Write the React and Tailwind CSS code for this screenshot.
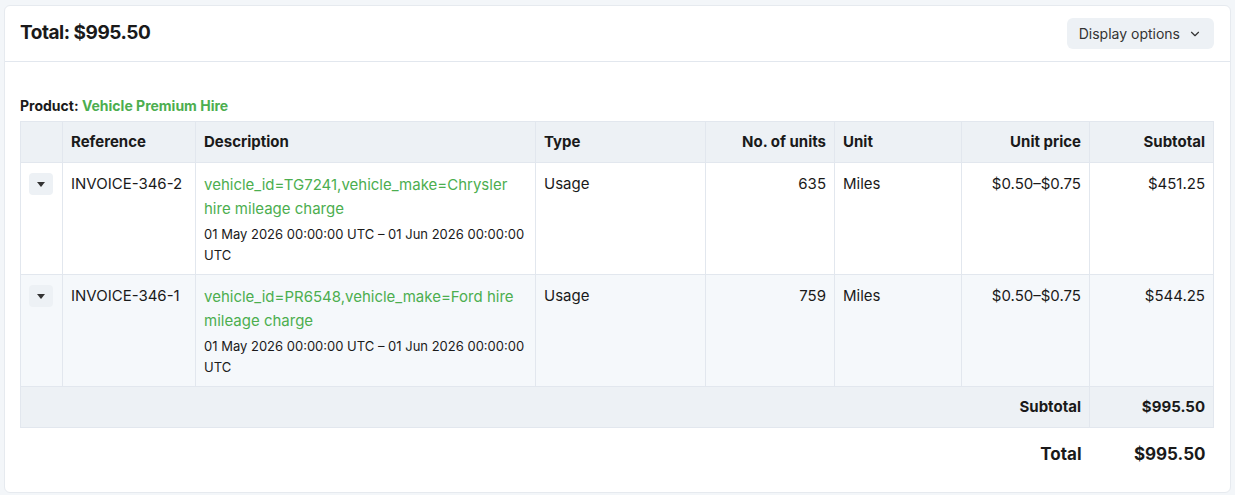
import React from 'react';
import { ChevronDown } from 'lucide-react';

const rows = [
  { ref: 'INVOICE-346-2', desc: 'vehicle_id=TG7241,vehicle_make=Chrysler hire mileage charge', units: 635, sub: '$451.25', bg: 'bg-white' },
  { ref: 'INVOICE-346-1', desc: 'vehicle_id=PR6548,vehicle_make=Ford hire mileage charge', units: 759, sub: '$544.25', bg: 'bg-[#f5f8fb]' },
];

const cell = 'border border-[#e2e7ee] px-2';
const top = `${cell} align-top pt-[10px]`;
const mid = `${cell} align-middle`;

export default function App() {
  return (
    <div className="min-h-[495px] bg-[#f3f6f9] px-1 pt-[5px] pb-[2px] text-[#1a1a1a]" style={{ fontFamily: 'Inter, "Noto Sans", sans-serif' }}>
      <div className="bg-white rounded-md border border-[#e6eaef] h-[488px]">
        <div className="flex items-center justify-between pl-[15px] pr-4 h-[56px] border-b border-[#e2e7ee]">
          <h1 className="text-[19px] font-bold tracking-tight">Total: $995.50</h1>
          <button className="flex items-center gap-2 bg-[#edf1f5] rounded-md h-[31px] px-3 text-[14px] text-[#333]">
            Display options <ChevronDown size={14} />
          </button>
        </div>
        <div className="pl-[15px] pr-4 pt-[33px]">
          <div className="text-[14px] font-bold mb-[5px]">Product: <span className="text-[#4cae4f]">Vehicle Premium Hire</span></div>
          <table className="w-full border-collapse text-[15px] table-fixed">
            <colgroup>
              <col className="w-[42px]" /><col className="w-[133px]" /><col className="w-[340px]" /><col className="w-[170px]" />
              <col className="w-[129px]" /><col className="w-[127px]" /><col className="w-[128px]" /><col />
            </colgroup>
            <thead>
              <tr className="bg-[#edf1f5] h-[41px] font-bold">
                <th className={mid}></th>
                <th className={`${mid} text-left`}>Reference</th>
                <th className={`${mid} text-left`}>Description</th>
                <th className={`${mid} text-left`}>Type</th>
                <th className={`${mid} text-right`}>No. of units</th>
                <th className={`${mid} text-left`}>Unit</th>
                <th className={`${mid} text-right`}>Unit price</th>
                <th className={`${mid} text-right`}>Subtotal</th>
              </tr>
            </thead>
            <tbody>
              {rows.map(r => (
                <tr key={r.ref} className={`${r.bg} h-[111px]`}>
                  <td className={top}>
                    <div className="w-[24px] h-[22px] rounded bg-[#edf1f5] flex items-center justify-center">
                      <svg width="8" height="5" viewBox="0 0 8 5"><path d="M0 0h8L4 5z" fill="#333" /></svg>
                    </div>
                  </td>
                  <td className={top}>{r.ref}</td>
                  <td className={`${top} pb-2`}>
                    <div className="text-[#4cae4f] leading-[24px]">{r.desc}</div>
                    <div className="text-[13px] leading-[21px] mt-[3px] break-all">01 May 2026 00:00:00 UTC – 01 Jun 2026 00:00:00 UTC</div>
                  </td>
                  <td className={top}>Usage</td>
                  <td className={`${top} text-right`}>{r.units}</td>
                  <td className={top}>Miles</td>
                  <td className={`${top} text-right`}>$0.50–$0.75</td>
                  <td className={`${top} text-right`}>{r.sub}</td>
                </tr>
              ))}
              <tr className="bg-[#edf1f5] h-[41px] font-bold">
                <td className={`${mid} text-right`} colSpan={7}>Subtotal</td>
                <td className={`${mid} text-right`}>$995.50</td>
              </tr>
              <tr className="h-[54px] font-bold text-[17px]">
                <td colSpan={7} className="text-right px-2 align-middle">Total</td>
                <td className="text-right px-2 align-middle">$995.50</td>
              </tr>
            </tbody>
          </table>
        </div>
      </div>
    </div>
  );
}
